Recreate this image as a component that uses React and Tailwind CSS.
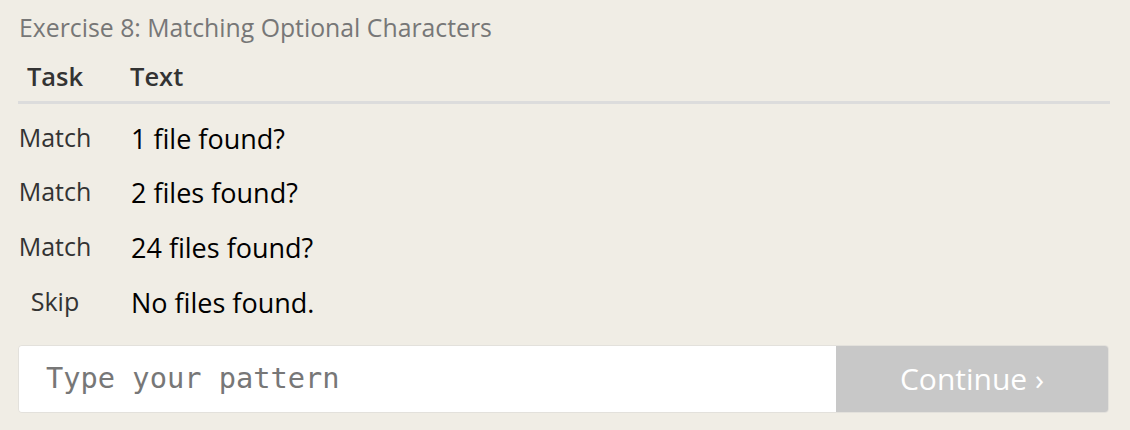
import React from 'react';

const rows = [
  { task: 'Match', text: '1 file found?' },
  { task: 'Match', text: '2 files found?' },
  { task: 'Match', text: '24 files found?' },
  { task: 'Skip', text: 'No files found.' },
];

export default function App() {
  return (
    <div className="w-[1130px] h-[430px] bg-[#f0ede5] px-[18px] pt-[10px] font-['Open_Sans',sans-serif]">
      <h1 className="text-[24.8px] leading-[34px] text-[#777] pl-[1px]">Exercise 8: Matching Optional Characters</h1>
      <table className="w-[1092px] mt-[12px] border-collapse">
        <thead>
          <tr className="border-b-[3px] border-[#dcdcdc]">
            <th className="w-[74px] text-center font-semibold text-[25.5px] leading-[40px] pb-[5px] text-[#333]">Task</th>
            <th className="text-left font-semibold text-[25.5px] leading-[40px] pb-[5px] pl-[38px] text-[#333]">Text</th>
          </tr>
        </thead>
        <tbody>
          {rows.map((r, i) => (
            <tr key={i} className="h-[55px]">
              <td className="text-center text-[25px] leading-[30px] text-[#333] align-top pt-[18px]">{r.task}</td>
              <td className="text-[27px] leading-[30px] text-black pl-[39px] align-top pt-[20px]">{r.text}</td>
            </tr>
          ))}
        </tbody>
      </table>
      <div className="flex w-[1091px] h-[68px] mt-[22px] rounded-[4px] border border-[#e3e1dc] overflow-hidden">
        <input
          className="flex-1 bg-white px-[27px] text-[28.7px] font-['DejaVu_Sans_Mono',monospace] placeholder:text-[#777] outline-none"
          placeholder="Type your pattern"
        />
        <button className="w-[272px] bg-[#c8c8c8] text-white text-[30px]">Continue ›</button>
      </div>
    </div>
  );
}
